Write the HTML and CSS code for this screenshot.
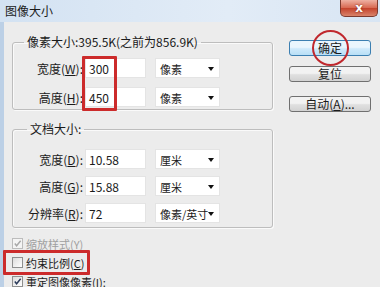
FILE: index.html
```
<!DOCTYPE html>
<html lang="zh-CN">
<head>
  <meta charset="UTF-8" />
  <title>图像大小</title>
  <link rel="stylesheet" href="styles.css">
</head>
<body>
  <div class="window">
    <div class="titlebar">
      <span class="title">图像大小</span>
      <span class="close">x</span>
    </div>

    <div class="client">
      <div class="main">
        <fieldset class="group pixels">
          <legend>像素大小:395.5K(之前为856.9K)</legend>
          <div class="row">
            <span class="label">宽度(<u>W</u>):</span>
            <span class="field">300</span>
            <span class="select">像素</span>
          </div>
          <div class="row">
            <span class="label">高度(<u>H</u>):</span>
            <span class="field">450</span>
            <span class="select">像素</span>
          </div>
        </fieldset>

        <fieldset class="group document">
          <legend>文档大小:</legend>
          <div class="row">
            <span class="label">宽度(<u>D</u>):</span>
            <span class="field">10.58</span>
            <span class="select">厘米</span>
          </div>
          <div class="row">
            <span class="label">高度(<u>G</u>):</span>
            <span class="field">15.88</span>
            <span class="select">厘米</span>
          </div>
          <div class="row">
            <span class="label">分辨率(<u>R</u>):</span>
            <span class="field">72</span>
            <span class="select">像素/英寸</span>
          </div>
        </fieldset>

        <div class="checks">
          <div class="check disabled">
            <span class="box"><svg viewBox="0 0 10 10"><polyline points="2,5 4,7.5 8.5,2"/></svg></span>
            <span>缩放样式(<u>Y</u>)</span>
          </div>
          <div class="check">
            <span class="box"></span>
            <span>约束比例(<u>C</u>)</span>
          </div>
          <div class="check">
            <span class="box"><svg viewBox="0 0 10 10"><polyline points="2,5 4,7.5 8.5,2"/></svg></span>
            <span>重定图像像素(<u>I</u>):</span>
          </div>
        </div>
      </div>

      <div class="side">
        <button class="btn primary">确定</button>
        <button class="btn">复位</button>
        <button class="btn auto">自动(<u>A</u>)...</button>
      </div>
    </div>

    <!-- red annotations drawn over the dialog -->
    <div class="mark mark-size"></div>
    <div class="mark mark-ratio"></div>
    <div class="mark-circle"></div>
  </div>
</body>
</html>
```

FILE: styles.css
```
body {
  margin: 0;
  width: 380px;
  height: 287px;
  overflow: hidden;
  background: #bcd0e6;
  font-family: "Noto Sans CJK SC", sans-serif;
  font-size: 12px;
  color: #1b1b1b;
}
.window {
  position: relative;
  height: 287px;
  display: flex;
  flex-direction: column;
}
.titlebar {
  height: 22px;
  flex: none;
  display: flex;
  justify-content: space-between;
  align-items: flex-start;
  background: linear-gradient(90deg, #d3e2f2, #e2ecf7 60%, #d8e5f3);
}
.title {
  padding-left: 5px;
  line-height: 22px;
}
.close {
  width: 36px;
  height: 16px;
  margin-right: 2px;
  border: 1px solid #7d3a2e;
  border-top: none;
  border-radius: 0 0 5px 5px;
  background: linear-gradient(#eeb1a2, #d86a53 48%, #c4432c 52%, #d9836a);
  color: #fff;
  font: bold 12px "DejaVu Sans", sans-serif;
  display: flex;
  justify-content: center;
  align-items: center;
  text-shadow: 0 0 2px #6b1d12;
}
.client {
  flex: 1;
  margin-left: 4px;
  background: #ececec;
  display: flex;
  gap: 16px;
  padding: 13px 0 0 8px;
}
.main {
  width: 261px;
}
.group {
  box-sizing: border-box;
  width: 261px;
  margin: 0;
  border: 1px solid #bdbdbd;
  border-radius: 3px;
  box-shadow: inset 1px 1px 0 #fafafa, 1px 1px 0 #fafafa;
  display: flex;
  flex-direction: column;
}
.group legend {
  margin-left: 11px;
  padding: 0 3px;
  line-height: 14px;
}
.pixels {
  padding: 9px 0 2px 0;
  gap: 9px;
}
.document {
  margin-top: 12px;
  padding: 13px 0 4px 0;
  gap: 7px;
}
.document legend {
  margin-left: 14px;
}
.row {
  display: flex;
  align-items: center;
  height: 20px;
}
.label {
  width: 70px;
  text-align: right;
  margin-right: 2px;
}
.field {
  box-sizing: border-box;
  width: 61px;
  height: 20px;
  line-height: 20px;
  padding-left: 3px;
  background: #fff;
  border: 1px solid #e4e4e4;
}
.select {
  box-sizing: border-box;
  position: relative;
  width: 65px;
  height: 20px;
  line-height: 20px;
  margin-left: 9px;
  padding-left: 4px;
  font-size: 11px;
  background: #fff;
  border: 1px solid #e4e4e4;
}
.select::after {
  content: "";
  position: absolute;
  right: 5px;
  top: 8px;
  border-left: 3.5px solid transparent;
  border-right: 3.5px solid transparent;
  border-top: 4px solid #111;
}
.checks {
  margin-top: 6px;
  display: flex;
  flex-direction: column;
  font-size: 11px;
}
.check {
  height: 19px;
  display: flex;
  align-items: center;
  gap: 3px;
}
.box {
  box-sizing: border-box;
  width: 11px;
  height: 11px;
  border: 1px solid #8e8f8f;
  background: linear-gradient(135deg, #dcdcdc, #fff);
  display: flex;
}
.box svg {
  width: 9px;
  height: 9px;
}
.box polyline {
  fill: none;
  stroke: #2a3a5a;
  stroke-width: 1.6;
}
.disabled {
  color: #a0a0a0;
}
.disabled .box {
  border-color: #bcbcbc;
  background: #f4f4f4;
}
.disabled .box polyline {
  stroke: #a8a8a8;
}
.side {
  display: flex;
  flex-direction: column;
  margin-top: 5px;
}
.btn {
  box-sizing: border-box;
  width: 82px;
  height: 16px;
  padding: 0;
  margin: 0 0 10px 0;
  font: 12px "Noto Sans CJK SC", sans-serif;
  line-height: 14px;
  color: #1b1b1b;
  border: 1px solid #707070;
  border-radius: 3px;
  background: linear-gradient(#f2f2f2 45%, #e0e0e0 55%, #d2d2d2);
}
.primary {
  border-color: #3c7fb1;
  background: linear-gradient(#eaf6fd 45%, #cfeafb 55%, #b9dff6);
}
.auto {
  margin-top: 4px;
}
.mark {
  position: absolute;
  border: 3px solid #cc2b2b;
  border-radius: 1px;
}
.mark-size {
  left: 82px;
  top: 56px;
  width: 29px;
  height: 49px;
}
.mark-ratio {
  left: 3px;
  top: 250px;
  width: 81px;
  height: 19px;
}
.mark-circle {
  position: absolute;
  left: 312px;
  top: 30px;
  width: 33px;
  height: 32px;
  border: 2px solid #c0282d;
  border-radius: 50%;
}
```
